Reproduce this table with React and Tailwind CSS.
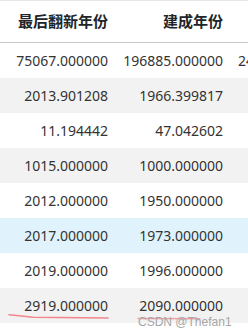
import React from "react";

const rows = [
  { a: "75067.000000", b: "196885.000000", c: "2413.000000", bg: "bg-white" },
  { a: "2013.901208", b: "1966.399817", c: "", bg: "bg-[#f2f2f2]" },
  { a: "11.194442", b: "47.042602", c: "", bg: "bg-white" },
  { a: "1015.000000", b: "1000.000000", c: "", bg: "bg-[#f2f2f2]" },
  { a: "2012.000000", b: "1950.000000", c: "", bg: "bg-white" },
  { a: "2017.000000", b: "1973.000000", c: "", bg: "bg-[#e0f3fc]" },
  { a: "2019.000000", b: "1996.000000", c: "", bg: "bg-white" },
  { a: "2919.000000", b: "2090.000000", c: "", bg: "bg-[#f2f2f2]" },
];

export default function App() {
  return (
    <div className="relative w-[248px] h-[336px] overflow-hidden bg-white text-[#333] font-['Noto_Sans','Noto_Sans_CJK_SC',sans-serif]">
      <div className="w-[360px] flex flex-col border-t border-[#e6e6e6]">
        <div className="flex h-[42px] items-center border-b border-[#c8c8c8] text-[15px] font-bold text-[#212529]">
          <div className="w-[118px] shrink-0 pr-[10px] text-right">最后翻新年份</div>
          <div className="w-[115px] shrink-0 pr-[10px] text-right">建成年份</div>
          <div className="w-[120px] shrink-0"></div>
        </div>
        {rows.map((r, i) => (
          <div key={i} className={`flex h-[35px] items-center text-[14px] ${r.bg}`}>
            <div className="w-[118px] shrink-0 pr-[10px] text-right">{r.a}</div>
            <div className="w-[115px] shrink-0 pr-[10px] text-right">{r.b}</div>
            <div className="w-[120px] shrink-0 pl-[5px] whitespace-nowrap">{r.c}</div>
          </div>
        ))}
      </div>
      <svg className="absolute left-0 top-0" width="248" height="336" viewBox="0 0 248 336">
        <path d="M9 314.8 Q22 316 33 317.3 L108 318" stroke="#f3868c" strokeWidth="1.6" fill="none" strokeLinecap="round" />
        <path d="M138 318.5 L200 318.8" stroke="#f3a0a4" strokeWidth="1.4" fill="none" strokeLinecap="round" />
      </svg>
      <div className="absolute left-[138px] top-[316px] leading-[12px] text-[12px] text-[#a6a6a6] whitespace-nowrap font-['Liberation_Sans',Arial,sans-serif]">
        CSDN @Thefan1
      </div>
    </div>
  );
}
